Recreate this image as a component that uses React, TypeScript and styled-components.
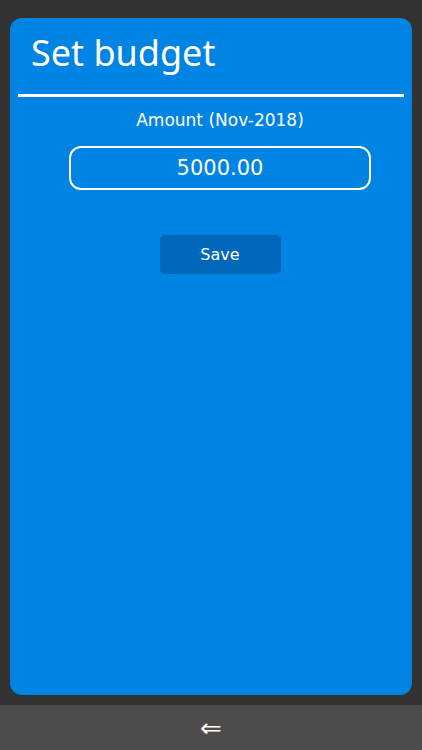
import React from "react";
import styled, { createGlobalStyle } from "styled-components";

const Global = createGlobalStyle`
  html, body { margin: 0; padding: 0; background: #323232; }
  body { font-family: "DejaVu Sans", "Noto Sans", sans-serif; }
`;

const Screen = styled.div`
  width: 422px;
  height: 750px;
  display: flex;
  flex-direction: column;
  background: #323232;
`;

const Body = styled.div`
  flex: 1;
  padding: 18px 10px 10px 10px;
  display: flex;
`;

const Card = styled.div`
  flex: 1;
  background: #0084e3;
  border-radius: 12px;
  padding: 0 8px;
  display: flex;
  flex-direction: column;
  align-items: stretch;
`;

const Title = styled.h1`
  margin: 0;
  padding: 14px 0 0 13px;
  height: 61px;
  box-sizing: border-box;
  font-family: "Noto Sans", sans-serif;
  font-size: 36px;
  font-weight: 400;
  color: #fff;
  line-height: 42px;
`;

const Divider = styled.div`
  height: 3px;
  background: #fff;
  margin-top: 15px;
`;

const Form = styled.div`
  display: flex;
  flex-direction: column;
  align-items: center;
  padding-left: 18px;
`;

const Label = styled.div`
  text-align: center;
  color: #fff;
  font-size: 17px;
  margin-top: 12px;
  line-height: 22px;
`;

const AmountInput = styled.div`
  width: 302px;
  height: 44px;
  box-sizing: border-box;
  margin-top: 15px;
  border: 2px solid #fff;
  border-radius: 12px;
  display: flex;
  align-items: center;
  justify-content: center;
  color: #fff;
  font-size: 21px;
`;

const SaveButton = styled.button`
  margin-top: 45px;
  width: 121px;
  height: 39px;
  border: none;
  border-radius: 5px;
  background: #0068bb;
  color: #fff;
  font-family: inherit;
  font-size: 16px;
`;

const NavBar = styled.div`
  height: 45px;
  background: #4f4b4a;
  display: flex;
  align-items: center;
  justify-content: center;
  color: #fff;
  font-size: 26px;
  line-height: 1;
`;

export default function App() {
  return (
    <Screen>
      <Global />
      <Body>
        <Card>
          <Title>Set budget</Title>
          <Divider />
          <Form>
            <Label>Amount (Nov-2018)</Label>
            <AmountInput>5000.00</AmountInput>
            <SaveButton>Save</SaveButton>
          </Form>
        </Card>
      </Body>
      <NavBar>⇐</NavBar>
    </Screen>
  );
}
